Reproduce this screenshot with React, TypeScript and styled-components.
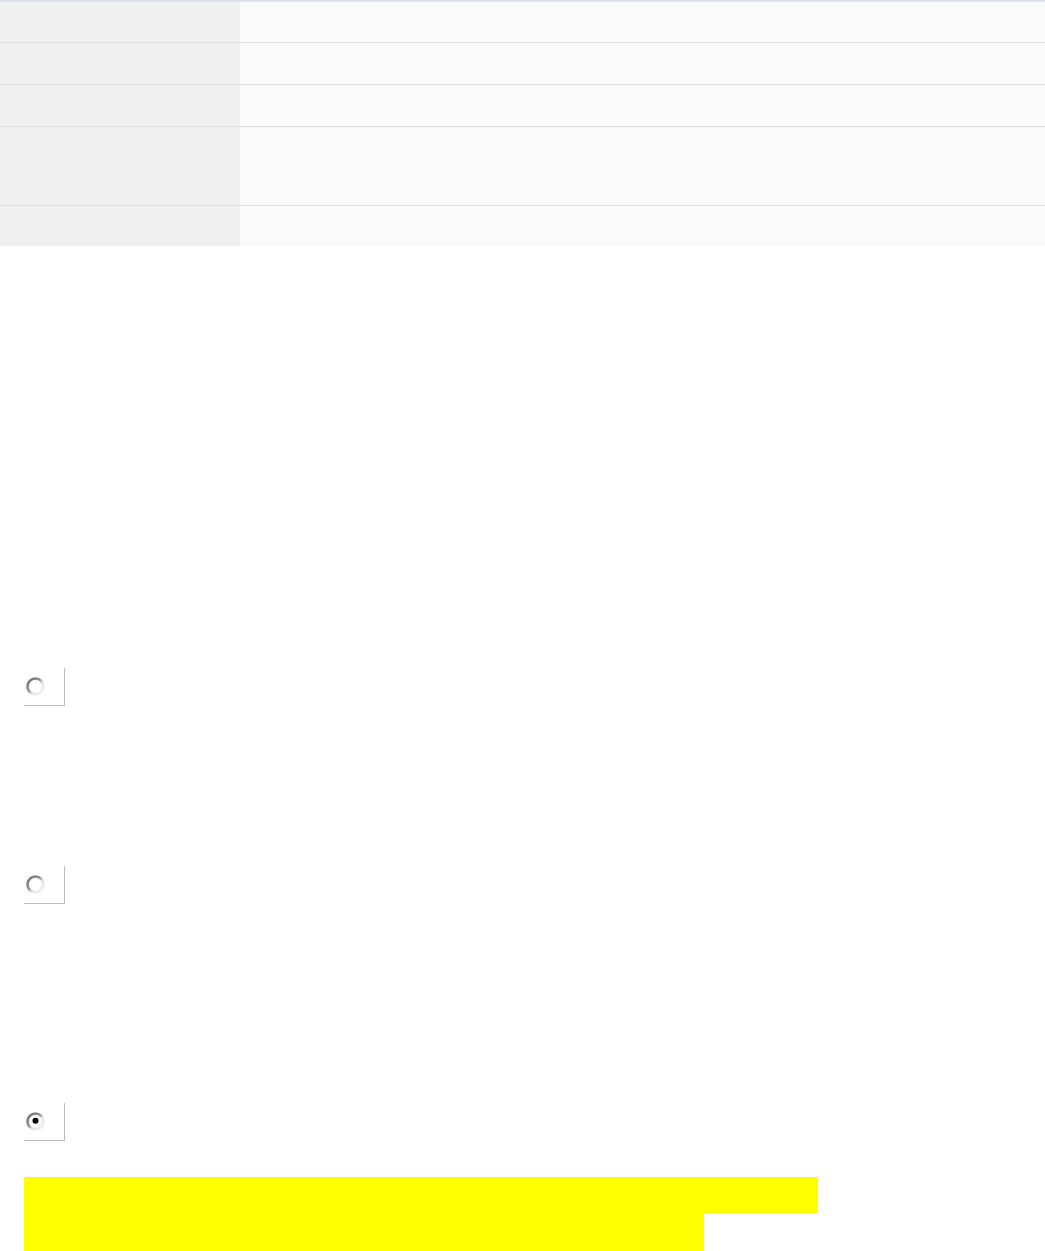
import React from "react";
import styled, { createGlobalStyle } from "styled-components";

const GlobalStyle = createGlobalStyle`
  html, body {
    margin: 0;
    padding: 0;
    background: #ffffff;
    font-family: "Liberation Sans", Arial, sans-serif;
  }
`;

const Page = styled.div`
  display: flex;
  flex-direction: column;
  width: 100%;
`;

const Table = styled.div`
  display: flex;
  flex-direction: column;
  border-top: 2px solid #dee1e5;
`;

const Row = styled.div<{ $height: number; $last?: boolean }>`
  display: grid;
  grid-template-columns: 240px 1fr;
  height: ${(p) => p.$height}px;
  border-bottom: ${(p) => (p.$last ? "none" : "1px solid #dddde1")};
`;

const LabelCell = styled.div`
  background: #f0f0f0;
`;

const ValueCell = styled.div`
  background: #fafafa;
`;

const Options = styled.div`
  display: flex;
  flex-direction: column;
  align-items: flex-start;
  padding: 422px 0 0 24px;
`;

const RadioBox = styled.label<{ $gapAfter: number }>`
  display: flex;
  align-items: flex-start;
  width: 40px;
  height: 37px;
  border-right: 1px solid #bcbcbc;
  border-bottom: 1px solid #bcbcbc;
  margin-bottom: ${(p) => p.$gapAfter}px;
`;

const RadioWrap = styled.span`
  display: block;
  width: 19px;
  height: 19px;
  margin: 9px 0 0 2px;
`;

const Highlight = styled.div`
  display: flex;
  flex-direction: column;
  align-items: flex-start;
`;

const HighlightLine = styled.div<{ $width: number; $height: number }>`
  width: ${(p) => p.$width}px;
  height: ${(p) => p.$height}px;
  background: #ffff00;
`;

function Radio({ checked }: { checked?: boolean }) {
  const id = checked ? "rg-on" : "rg-off";
  return (
    <RadioWrap>
      <svg width="19" height="19" viewBox="0 0 19 19">
        <defs>
          <linearGradient id={id} x1="0" y1="0" x2="1" y2="1">
            <stop offset="0" stopColor="#6a6a6a" />
            <stop offset="0.45" stopColor="#959595" />
            <stop offset="0.6" stopColor="#e4e4e4" />
            <stop offset="1" stopColor="#f2f2f2" />
          </linearGradient>
        </defs>
        <circle cx="9.5" cy="9.5" r="8" fill="#ffffff" stroke={`url(#${id})`} strokeWidth="2.6" />
        <circle cx="9.5" cy="9.5" r="6.1" fill="none" stroke="#f2f2f2" strokeWidth="1" />
        {checked && <circle cx="9.5" cy="8.8" r="3" fill="#000000" />}
      </svg>
    </RadioWrap>
  );
}

const rows = [40, 41, 41, 78, 40];

export default function App() {
  return (
    <>
      <GlobalStyle />
      <Page>
        <Table>
          {rows.map((h, idx) => (
            <Row key={idx} $height={h} $last={idx === rows.length - 1}>
              <LabelCell />
              <ValueCell />
            </Row>
          ))}
        </Table>
        <Options>
          <RadioBox $gapAfter={160}>
            <Radio />
          </RadioBox>
          <RadioBox $gapAfter={199}>
            <Radio />
          </RadioBox>
          <RadioBox $gapAfter={36}>
            <Radio checked />
          </RadioBox>
          <Highlight>
            <HighlightLine $width={794} $height={36} />
            <HighlightLine $width={680} $height={40} />
          </Highlight>
        </Options>
      </Page>
    </>
  );
}
